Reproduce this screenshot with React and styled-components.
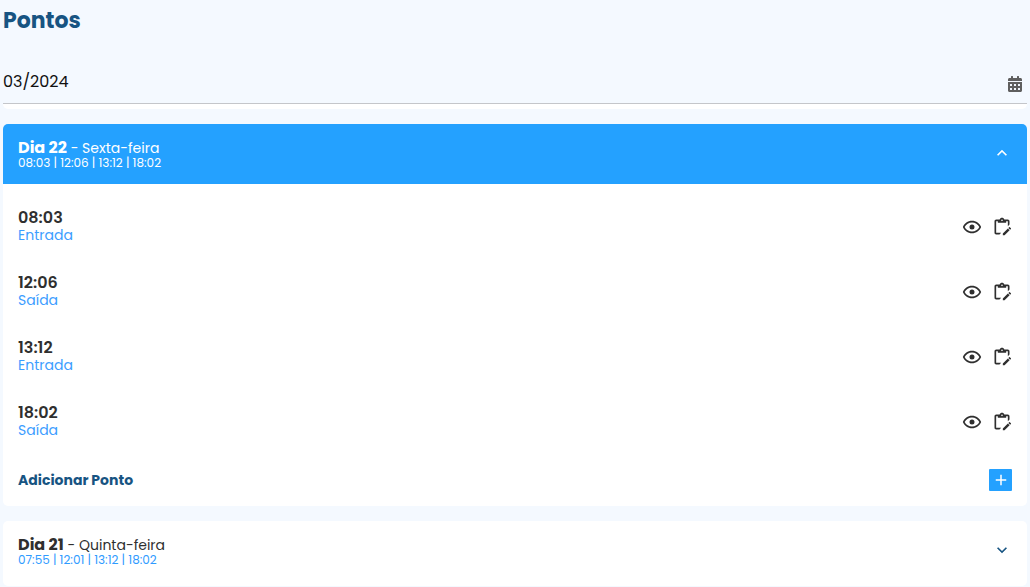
import React, { useState } from 'react';
import styled, { createGlobalStyle } from 'styled-components';
import { FaCalendarAlt } from 'react-icons/fa';

const days = [
  {
    day: 22,
    weekday: 'Sexta-feira',
    points: [
      { time: '08:03', type: 'Entrada' },
      { time: '12:06', type: 'Saída' },
      { time: '13:12', type: 'Entrada' },
      { time: '18:02', type: 'Saída' },
    ],
  },
  {
    day: 21,
    weekday: 'Quinta-feira',
    points: [
      { time: '07:55', type: 'Entrada' },
      { time: '12:01', type: 'Saída' },
      { time: '13:12', type: 'Entrada' },
      { time: '18:02', type: 'Saída' },
    ],
  },
];

const icons = {
  eye: 'M12,9A3,3 0 0,1 15,12A3,3 0 0,1 12,15A3,3 0 0,1 9,12A3,3 0 0,1 12,9M12,4.5C17,4.5 21.27,7.61 23,12C21.27,16.39 17,19.5 12,19.5C7,19.5 2.73,16.39 1,12C2.73,7.61 7,4.5 12,4.5M3.18,12C4.83,15.36 8.24,17.5 12,17.5C15.76,17.5 19.17,15.36 20.82,12C19.17,8.64 15.76,6.5 12,6.5C8.24,6.5 4.83,8.64 3.18,12Z',
  edit: 'M21.04 12.13C21.18 12.13 21.31 12.19 21.42 12.3L22.7 13.58C22.92 13.79 22.92 14.14 22.7 14.35L21.7 15.35L19.65 13.3L20.65 12.3C20.76 12.19 20.9 12.13 21.04 12.13M19.07 13.88L21.12 15.93L15.06 22H13V19.94L19.07 13.88M11 19L9 21H5C3.9 21 3 20.1 3 19V5C3 3.9 3.9 3 5 3H9.18C9.6 1.84 10.7 1 12 1C13.3 1 14.4 1.84 14.82 3H19C20.1 3 21 3.9 21 5V9L19 11V5H17V7H7V5H5V19H11M12 3C11.45 3 11 3.45 11 4C11 4.55 11.45 5 12 5C12.55 5 13 4.55 13 4C13 3.45 12.55 3 12 3Z',
  plus: 'M19,13H13V19H11V13H5V11H11V5H13V11H19V13Z',
  up: 'M7.41,15.41L12,10.83L16.59,15.41L18,14L12,8L6,14L7.41,15.41Z',
  down: 'M7.41,8.58L12,13.17L16.59,8.58L18,10L12,16L6,10L7.41,8.58Z',
};

const Icon = ({ name, size = 20 }) => (
  <svg width={size} height={size} viewBox='0 0 24 24' fill='currentColor' aria-hidden='true'>
    <path d={icons[name]} />
  </svg>
);

const DayCard = ({ item, open, onToggle }) => {
  const { day, weekday, points } = item;
  return (
    <Card>
      <DayHeader type='button' $open={open} aria-expanded={open} onClick={onToggle}>
        <span>
          <DayTitle $open={open}>
            <strong>Dia {day}</strong> - {weekday}
          </DayTitle>
          <DayTimes $open={open}>{points.map((point) => point.time).join(' | ')}</DayTimes>
        </span>
        <Icon name={open ? 'up' : 'down'} />
      </DayHeader>
      {open && (
        <>
          <PointList>
            {points.map(({ time, type }) => (
              <PointRow key={time}>
                <div>
                  <PointTime>{time}</PointTime>
                  <PointType>{type}</PointType>
                </div>
                <Actions>
                  <IconButton type='button' aria-label={`Visualizar ${time}`}>
                    <Icon name='eye' />
                  </IconButton>
                  <IconButton type='button' aria-label={`Editar ${time}`}>
                    <Icon name='edit' />
                  </IconButton>
                </Actions>
              </PointRow>
            ))}
          </PointList>
          <AddRow>
            <span id={`add-${day}`}>Adicionar Ponto</span>
            <AddButton type='button' aria-labelledby={`add-${day}`}>
              <Icon name='plus' size={18} />
            </AddButton>
          </AddRow>
        </>
      )}
    </Card>
  );
};

const App = () => {
  const [month, setMonth] = useState('03/2024');
  const [openDay, setOpenDay] = useState(22);

  return (
    <>
      <GlobalStyle />
      <Page>
        <Title>Pontos</Title>
        <FilterCard>
          <MonthField>
            <input
              type='text'
              aria-label='Mês'
              value={month}
              onChange={(e) => setMonth(e.target.value)}
            />
            <CalendarButton type='button' aria-label='Abrir calendário'>
              <FaCalendarAlt size={16} />
            </CalendarButton>
          </MonthField>
        </FilterCard>
        <DayList>
          {days.map((item) => (
            <DayCard
              key={item.day}
              item={item}
              open={openDay === item.day}
              onToggle={() => setOpenDay(openDay === item.day ? null : item.day)}
            />
          ))}
        </DayList>
      </Page>
    </>
  );
};

const GlobalStyle = createGlobalStyle`
  * {
    box-sizing: border-box;
  }
  body {
    margin: 0;
    background: #f4f9ff;
    color: #2f2f2f;
    font-family: Poppins, Inter, sans-serif;
  }
  button,
  input {
    margin: 0;
    padding: 0;
    border: none;
    background: none;
    color: inherit;
    font: inherit;
  }
  button {
    cursor: pointer;
  }
  svg {
    display: block;
    flex-shrink: 0;
  }
`;

const Page = styled.main`
  padding: 5px 3px 0;
`;

const Title = styled.h1`
  margin: 0;
  color: #175482;
  font-size: 22px;
  font-weight: 700;
  line-height: 32px;
`;

const FilterCard = styled.div`
  margin: 22px 0 15px;
  padding-bottom: 5px;
  border-radius: 5px;
  background: #fff;
`;

const MonthField = styled.div`
  display: flex;
  align-items: center;
  height: 45px;
  border-bottom: 1px solid #c4c6ca;
  background: #f4f9ff;

  input {
    flex: 1;
    min-width: 0;
    height: 100%;
    color: #111;
    font-size: 16px;
    outline: none;
  }
`;

const CalendarButton = styled.button`
  padding: 8px 4px 2px 3px;
  color: #5f5f5f;
`;

const DayList = styled.div`
  display: flex;
  flex-direction: column;
  gap: 15px;
`;

const Card = styled.section`
  overflow: hidden;
  border-radius: 5px;
  background: #fff;
`;

const DayHeader = styled.button`
  display: flex;
  align-items: center;
  justify-content: space-between;
  width: 100%;
  padding: ${({ $open }) => ($open ? '14px 15px 16px' : '14px 15px 21px')};
  background: ${({ $open }) => ($open ? '#24a1ff' : '#fff')};
  color: ${({ $open }) => ($open ? '#fff' : '#175482')};
  text-align: left;
`;

const DayTitle = styled.span`
  display: block;
  color: ${({ $open }) => ($open ? '#fff' : '#2f2f2f')};
  font-size: 14px;
  line-height: 20px;

  strong {
    font-size: 16px;
    font-weight: 700;
  }
`;

const DayTimes = styled.span`
  display: block;
  color: ${({ $open }) => ($open ? '#fff' : '#2f9bff')};
  font-size: 12px;
  line-height: 10px;
`;

const PointList = styled.ul`
  margin: 0;
  padding: 10px 15px 0;
  list-style: none;
`;

const PointRow = styled.li`
  display: flex;
  align-items: center;
  justify-content: space-between;
  height: 65px;
`;

const PointTime = styled.div`
  font-size: 16px;
  font-weight: 600;
  line-height: 17px;
`;

const PointType = styled.div`
  color: #3c9dff;
  font-size: 14px;
  line-height: 18px;
`;

const Actions = styled.div`
  display: flex;
  gap: 10px;
`;

const IconButton = styled.button`
  color: #2f2f2f;
`;

const AddRow = styled.div`
  display: flex;
  align-items: center;
  justify-content: space-between;
  height: 52px;
  padding: 0 15px;
  color: #175482;
  font-size: 14px;
  font-weight: 700;
`;

const AddButton = styled.button`
  display: flex;
  align-items: center;
  justify-content: center;
  width: 23px;
  height: 22px;
  border-radius: 1px;
  background: #24a1ff;
  color: #fff;
`;

export default App;
